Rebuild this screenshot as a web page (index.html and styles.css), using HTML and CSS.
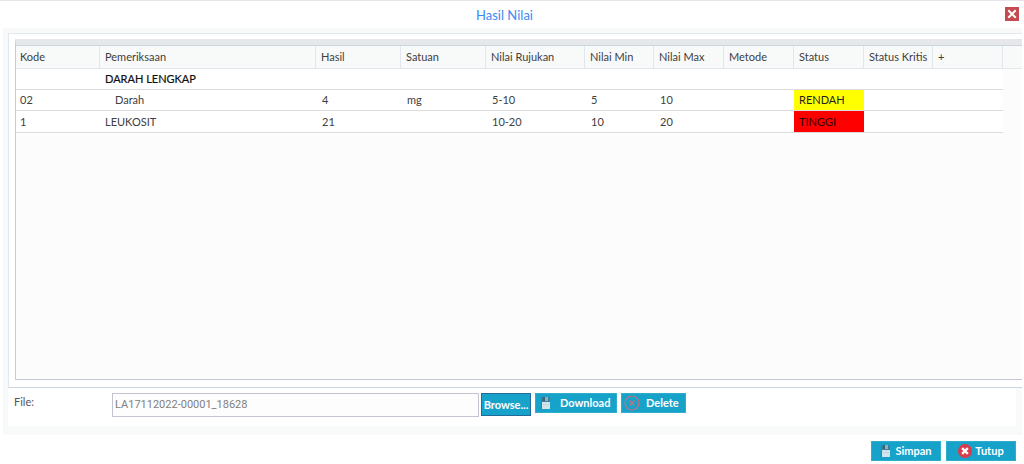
FILE: index.html
```html
<!DOCTYPE html>
<html lang="id">
<head>
<meta charset="utf-8">
<title>Hasil Nilai</title>
<link rel="stylesheet" href="styles.css">
</head>
<body>
<svg class="defs" aria-hidden="true">
  <symbol id="disk" viewBox="0 0 12 14">
    <path d="M1 1h9v12H1z" fill="#3f7f98"/>
    <path d="M3 1h5v4H3z" fill="#3a6478"/>
    <path d="M5 1h3v4H5z" fill="#86b4c4"/>
    <path d="M2 6h8v7H2z" fill="#d3e3e9"/>
    <path d="M3 8h6v1H3z" fill="#bdd5dd"/>
  </symbol>
</svg>
<div class="dialog">
  <header class="titlebar">
    <h1 class="title">Hasil Nilai</h1>
    <button class="close" type="button" aria-label="Close">
      <svg viewBox="0 0 14 14" width="14" height="14"><path d="M4 4l6 6M10 4l-6 6" stroke="#fff" stroke-width="2" stroke-linecap="square"/></svg>
    </button>
  </header>
  <main class="body">
    <section class="panel">
      <div class="grid">
        <table class="results">
          <colgroup>
            <col class="w-kode"><col class="w-name"><col class="w-mid"><col class="w-mid"><col class="w-ref"><col class="w-min"><col class="w-val"><col class="w-val"><col class="w-val"><col class="w-min"><col class="w-val"><col>
          </colgroup>
          <thead>
            <tr><th>Kode</th><th>Pemeriksaan</th><th>Hasil</th><th>Satuan</th><th>Nilai Rujukan</th><th>Nilai Min</th><th>Nilai Max</th><th>Metode</th><th>Status</th><th>Status Kritis</th><th>+</th><th></th></tr>
          </thead>
          <tbody>
            <tr><td></td><td class="group">DARAH LENGKAP</td><td></td><td></td><td></td><td></td><td></td><td></td><td></td><td></td><td></td><td class="rest"></td></tr>
            <tr><td>02</td><td class="child">Darah</td><td class="num">4</td><td class="num">mg</td><td class="num">5-10</td><td class="num">5</td><td class="num">10</td><td></td><td class="low">RENDAH</td><td></td><td></td><td class="rest"></td></tr>
            <tr><td>1</td><td>LEUKOSIT</td><td class="num">21</td><td></td><td class="num">10-20</td><td class="num">10</td><td class="num">20</td><td></td><td class="high">TINGGI</td><td></td><td></td><td class="rest"></td></tr>
          </tbody>
        </table>
      </div>
    </section>
    <section class="file">
      <label class="file-label" for="file">File:</label>
      <input class="file-input" id="file" type="text" value="LA17112022-00001_18628">
      <button class="btn browse" type="button">Browse...</button>
      <button class="btn download" type="button"><svg class="disk"><use href="#disk"/></svg>Download</button>
      <button class="btn delete" type="button"><svg width="16" height="16" viewBox="0 0 16 16" fill="none" stroke="#c4717d" stroke-width="1.2"><circle cx="8" cy="8" r="7"/><path d="M5.5 5.5l5 5M10.500 5.500l-5 5"/></svg>Delete</button>
    </section>
  </main>
  <footer class="actions">
    <button class="btn action" type="button"><svg class="disk"><use href="#disk"/></svg>Simpan</button>
    <button class="btn action" type="button"><svg width="14" height="14" viewBox="0 0 14 14"><circle cx="7" cy="7" r="7" fill="#dc3b4c"/><path d="M5 5l4 4M9 5l-4 4" stroke="#fff" stroke-width="2.4" stroke-linecap="square"/></svg>Tutup</button>
  </footer>
</div>
</body>
</html>
```
FILE: styles.css
```css
* { box-sizing: border-box; }
body {
  margin: 0;
  background: #fff;
  color: #404040;
  font: 11px/16px Lato, "Liberation Sans", sans-serif;
}
button, input { font: inherit; margin: 0; border-radius: 0; }
svg { flex: none; }
.defs { display: none; }
.dialog {
  display: flex;
  flex-direction: column;
  min-height: 100vh;
  border-top: 1px solid #e6e6e8;
}
.titlebar {
  display: grid;
  grid-template-columns: 1fr auto 1fr;
  align-items: center;
  height: 27px;
  padding: 0 5px 2px 0;
}
.title {
  grid-column: 2;
  margin: 0;
  padding: 2px 10px 0 0;
  color: #3b8bf5;
  font: 400 13px/16px Lato, sans-serif;
}
.close {
  display: flex;
  justify-self: end;
  padding: 0;
  border: 0;
  background: #c44b4f;
}
.body {
  display: flex;
  flex: 1;
  flex-direction: column;
  margin: 0 2px 0 3px;
  padding: 5px 0 9px 5px;
  background: #f8f9f9;
}
.panel {
  display: flex;
  flex: 1;
  padding: 5px 0 7px 6px;
  border: 1px solid #e2e8f0;
  border-right: 0;
  border-bottom-color: #c9d6de;
  background: #fff;
}
.grid {
  flex: 1;
  border-top: 6px solid #e6e7ea;
  border-left: 1px solid #c3ccd4;
  border-bottom: 1px solid #c3c9d2;
  background: #fcfcfc;
}
.results {
  width: 100%;
  table-layout: fixed;
  border-collapse: separate;
  border-spacing: 0;
  border-top: 1px solid #cbd6de;
}
.w-kode { width: 84px; }
.w-name { width: 216px; }
.w-mid { width: 85px; }
.w-ref { width: 99px; }
.w-min { width: 69px; }
.w-val { width: 70px; }
th, td { padding: 0 0 0 5px; text-align: left; white-space: nowrap; }
th {
  height: 23px;
  border-right: 1px solid #e2e6ef;
  border-bottom: 1px solid #e4e7ee;
  background: #f8f9f9;
  font-weight: 400;
}
th:first-child, td:first-child { padding-left: 4px; }
th:last-child { border-right: 0; }
td { height: 21px; border-bottom: 1px solid #dcdcdc; background: #fff; }
tr:last-child td { height: 22px; }
.rest, tr:last-child .rest { border-bottom: 0; background: #fcfcfc; }
.group { color: #111; -webkit-text-stroke: 0.2px #111; }
.child { padding-left: 15px; }
.num { padding-left: 6px; }
.low { background: #ff0; color: #222; }
.high { background: #f00; color: #300; }
.file {
  display: flex;
  align-items: flex-start;
  gap: 4px;
  height: 38px;
  margin-right: 6px;
  padding: 5px 0 0 6px;
  background: #fff;
}
.file-label { width: 94px; padding-top: 1px; color: #555; }
.file-input {
  width: 367px;
  height: 24px;
  padding: 0 2px 2px;
  border: 1px solid #c2c5d0;
  background: #fdfdfd;
  color: #808080;
  font-family: Roboto, sans-serif;
}
.btn {
  display: flex;
  align-items: center;
  height: 20px;
  padding: 0;
  border: 1px solid #30accd;
  background: #17a2ca;
  color: #fff;
  font-weight: 700;
}
.browse { justify-content: center; width: 50px; height: 23px; margin-left: -2px; border-color: #236c99; }
.download { width: 82px; padding-left: 4px; gap: 8px; }
.delete { width: 65px; padding-left: 2px; gap: 6px; }
.disk { width: 12px; height: 14px; }
.actions {
  display: flex;
  justify-content: flex-end;
  gap: 5px;
  height: 29px;
  padding: 6px 8px 0 0;
}
.action { justify-content: center; gap: 3px; width: 70px; }
```
